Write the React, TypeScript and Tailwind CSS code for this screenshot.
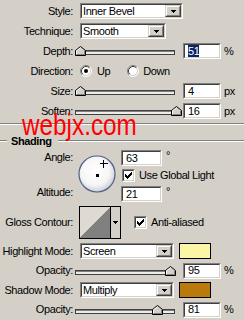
import React from "react";

type Kids = { children?: React.ReactNode; className?: string };

const Sunken = ({ className = "", inner = "bg-white", children }: Kids & { inner?: string }) => (
  <div className={`shrink-0 border border-t-[#808080] border-l-[#808080] border-b-white border-r-white ${className}`}>
    <div className={`w-full h-full border border-t-[#404040] border-l-[#404040] border-b-[#d4d0c8] border-r-[#d4d0c8] flex items-center ${inner}`}>
      {children}
    </div>
  </div>
);

const Arrow = () => (
  <svg width="5" height="3" viewBox="0 0 5 3" shapeRendering="crispEdges">
    <rect x="0" y="0" width="5" height="1" fill="#000" />
    <rect x="1" y="1" width="3" height="1" fill="#000" />
    <rect x="2" y="2" width="1" height="1" fill="#000" />
  </svg>
);

const DropBtn = () => (
  <div className="w-[16px] h-full shrink-0 border border-t-[#d4d0c8] border-l-[#d4d0c8] border-b-[#404040] border-r-[#404040]">
    <div className="w-full h-full border border-t-white border-l-white border-b-[#808080] border-r-[#808080] bg-[#d4d0c8] flex items-center justify-center">
      <Arrow />
    </div>
  </div>
);

const Select = ({ text, className = "" }: { text: string; className?: string }) => (
  <Sunken className={`h-[16px] ${className}`}>
    <span className="flex-1 pl-[1px] whitespace-nowrap overflow-hidden">{text}</span>
    <DropBtn />
  </Sunken>
);

const Field = ({ value, w = "w-[38px]", sel = false, className = "" }: { value: string; w?: string; sel?: boolean; className?: string }) => (
  <Sunken className={`${w} h-[16px] ${className}`}>
    <span className={`ml-[3px] h-full flex items-center ${sel ? "bg-[#0a246a] text-white" : ""}`}>{value}</span>
  </Sunken>
);

const Thumb = ({ pos }: { pos: string }) => (
  <svg className={`absolute top-0 ${pos}`} width="11" height="10" viewBox="0 0 11 10">
    <path d="M0.5 9.5V4.5L5.5 0.5L10.5 4.5V9.5Z" fill="#d4d0c8" stroke="#000" />
    <path d="M1.5 8.5V5L5.5 1.8" stroke="#fff" fill="none" />
    <path d="M1.5 8.5H9.5V5" stroke="#808080" fill="none" />
  </svg>
);

const Slider = ({ pos }: { pos: string }) => (
  <div className="relative ml-[2px] w-[108px] h-[10px] shrink-0">
    <div className="mt-[4px] w-[100px] h-[5px] border border-[#404040] bg-[#d4d0c8]">
      <div className="h-full border-t border-t-[#808080] bg-white/60" />
    </div>
    <Thumb pos={pos} />
  </div>
);

const Radio = ({ checked }: { checked?: boolean }) => (
  <svg width="12" height="12" viewBox="0 0 12 12" className="shrink-0">
    <circle cx="6" cy="6" r="5" fill="#fff" />
    <path d="M2.11 9.89A5.5 5.5 0 0 1 9.89 2.11" stroke="#808080" fill="none" />
    <path d="M9.89 2.11A5.5 5.5 0 0 1 2.11 9.89" stroke="#fff" fill="none" />
    <path d="M2.82 9.18A4.5 4.5 0 0 1 9.18 2.82" stroke="#404040" fill="none" />
    <path d="M9.18 2.82A4.5 4.5 0 0 1 2.82 9.18" stroke="#d4d0c8" fill="none" />
    {checked && <circle cx="6" cy="6" r="2" fill="#000" />}
  </svg>
);

const CHECK = ["......X", ".....XX", "X...XXX", "XX.XXX.", "XXXXX..", ".XXX...", "..X...."];

const Checkbox = ({ className = "" }: { className?: string }) => (
  <Sunken className={`w-[13px] h-[13px] ${className}`} inner="bg-white justify-center">
    <svg width="7" height="7" viewBox="0 0 7 7" shapeRendering="crispEdges">
      {CHECK.flatMap((row, y) =>
        row.split("").map((c, x) => (c === "X" ? <rect key={`${x}-${y}`} x={x} y={y} width="1" height="1" fill="#000" /> : null))
      )}
    </svg>
  </Sunken>
);

const Row = ({ label, children, h = "h-[20px]" }: { label: string; children?: React.ReactNode; h?: string }) => (
  <div className={`flex items-center ${h}`}>
    <div className="w-[73px] shrink-0 text-right whitespace-nowrap">{label}</div>
    {children}
  </div>
);

const Groove = ({ className = "" }: { className?: string }) => (
  <div className={`h-[2px] border-t border-b border-t-[#808080] border-b-white ${className}`} />
);

export default function App() {
  return (
    <div className="relative w-[244px] h-[320px] overflow-hidden bg-[#d4d0c8] text-black text-[11px] leading-none font-['Liberation_Sans',Arial,sans-serif] tracking-[-0.4px]">
      <div className="pt-[1px]">
        <Row label="Style:">
          <Select className="ml-[7px] w-[103px]" text="Inner Bevel" />
        </Row>
        <Row label="Technique:">
          <Select className="ml-[7px] w-[86px]" text="Smooth" />
        </Row>
        <Row label="Depth:">
          <Slider pos="left-[0px]" />
          <Field value="51" sel />
          <span className="ml-[3px]">%</span>
        </Row>
        <Row label="Direction:">
          <div className="ml-[7px] flex items-center">
            <Radio checked />
            <span className="ml-[5px]">Up</span>
          </div>
          <div className="ml-[17px] flex items-center">
            <Radio />
            <span className="ml-[4px]">Down</span>
          </div>
        </Row>
        <Row label="Size:">
          <Slider pos="left-[0px]" />
          <Field value="4" />
          <span className="ml-[3px]">px</span>
        </Row>
        <Row label="Soften:">
          <Slider pos="left-[96px]" />
          <Field value="16" />
          <span className="ml-[3px]">px</span>
        </Row>
      </div>

      <Groove className="mt-[2px]" />

      <div className="mt-[10px] h-[12px] flex items-center">
        <Groove className="w-[7px]" />
        <span className="ml-[4px] font-bold">Shading</span>
        <Groove className="ml-[6px] flex-1" />
      </div>

      <div className="mt-[3px] flex items-start">
        <div className="w-[73px] shrink-0 flex flex-col items-end">
          <div className="h-[14px] leading-[14px]">Angle:</div>
          <div className="mt-[21px] h-[14px] leading-[14px]">Altitude:</div>
        </div>
        <svg className="ml-[5px] mt-[5px] shrink-0" width="38" height="38" viewBox="0 0 38 38">
          <defs>
            <radialGradient id="ag" cx="45%" cy="42%" r="60%">
              <stop offset="0" stopColor="#ffffff" />
              <stop offset="0.65" stopColor="#f6f6f6" />
              <stop offset="0.9" stopColor="#d8d8dc" />
              <stop offset="1" stopColor="#b8bcc8" />
            </radialGradient>
          </defs>
          <circle cx="19" cy="19" r="18" fill="url(#ag)" stroke="#4e5f8c" strokeWidth="1.2" />
          <rect x="18" y="19" width="3" height="3" fill="#000" />
          <path d="M21.5 8.5H29.5M25.5 4.5V12.5" stroke="#000" strokeWidth="1" shapeRendering="crispEdges" />
        </svg>
        <div className="ml-[5px] flex flex-col">
          <div className="flex items-start">
            <Field value="63" w="w-[41px]" />
            <span className="ml-[4px] leading-[10px]">°</span>
          </div>
          <div className="mt-[3px] flex items-center">
            <Checkbox className="ml-[1px]" />
            <span className="ml-[4px] whitespace-nowrap">Use Global Light</span>
          </div>
          <div className="mt-[4px] flex items-start">
            <Field value="21" w="w-[41px]" />
            <span className="ml-[4px] leading-[10px]">°</span>
          </div>
        </div>
      </div>

      <div className="mt-[4px] flex items-center h-[33px]">
        <div className="w-[73px] shrink-0 text-right whitespace-nowrap">Gloss Contour:</div>
        <div className="ml-[6px] w-[42px] h-[33px] shrink-0 border border-black flex bg-[#d4d0c8]">
          <svg width="30" height="31" viewBox="0 0 30 31" shapeRendering="crispEdges" className="shrink-0">
            <rect x="0" y="0" width="30" height="31" fill="#dedad2" />
            <polygon points="0,31 30,0 30,31" fill="#808080" />
          </svg>
          <div className="w-px bg-black shrink-0" />
          <div className="flex-1 flex items-center justify-center">
            <Arrow />
          </div>
        </div>
        <Checkbox className="ml-[13px]" />
        <span className="ml-[4px]">Anti-aliased</span>
      </div>

      <div className="mt-[2px]">
        <Row label="Highlight Mode:">
          <Select className="ml-[7px] w-[94px]" text="Screen" />
          <div className="ml-[5px] w-[32px] h-[16px] border border-black bg-[#fbf5a6]" />
        </Row>
        <Row label="Opacity:" h="h-[19px]">
          <Slider pos="left-[90px]" />
          <Field value="95" />
          <span className="ml-[3px]">%</span>
        </Row>
        <Row label="Shadow Mode:">
          <Select className="ml-[7px] w-[94px]" text="Multiply" />
          <div className="ml-[5px] w-[32px] h-[16px] border border-black bg-[#b9790c]" />
        </Row>
        <Row label="Opacity:" h="h-[19px]">
          <Slider pos="left-[77px]" />
          <Field value="81" />
          <span className="ml-[3px]">%</span>
        </Row>
      </div>

      <div className="absolute left-[22px] top-[110px] text-[30px] leading-none tracking-normal text-[#ff0000] origin-left scale-x-[0.81] whitespace-nowrap font-['Liberation_Sans',Arial,sans-serif]">
        webjx.com
      </div>
    </div>
  );
}
